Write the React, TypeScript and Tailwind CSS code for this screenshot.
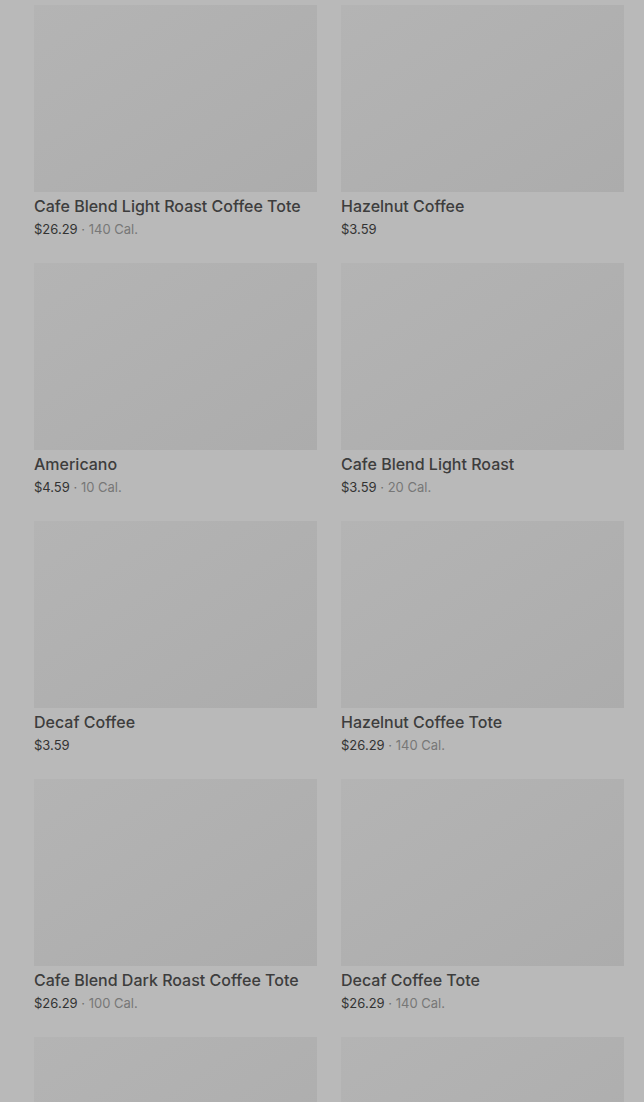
import React from 'react'

type Item = { name?: string; price?: string; cal?: string }

const items: Item[] = [
  { name: 'Cafe Blend Light Roast Coffee Tote', price: '$26.29', cal: '140 Cal.' },
  { name: 'Hazelnut Coffee', price: '$3.59' },
  { name: 'Americano', price: '$4.59', cal: '10 Cal.' },
  { name: 'Cafe Blend Light Roast', price: '$3.59', cal: '20 Cal.' },
  { name: 'Decaf Coffee', price: '$3.59' },
  { name: 'Hazelnut Coffee Tote', price: '$26.29', cal: '140 Cal.' },
  { name: 'Cafe Blend Dark Roast Coffee Tote', price: '$26.29', cal: '100 Cal.' },
  { name: 'Decaf Coffee Tote', price: '$26.29', cal: '140 Cal.' },
  // last row only peeks in under the fold
  {},
  {},
]

const ProductCard = ({ item }: { item: Item }) => (
  <div className="flex flex-col">
    <div className="h-[187px] bg-gradient-to-br from-[#b4b4b4] to-[#acacac]" />
    {item.name && (
      <>
        <div className="mt-1 text-[16px] leading-5 font-medium text-[#3d3d3d] truncate">{item.name}</div>
        <div className="mt-[3px] text-[13px] leading-5 text-[#333333]">
          {item.price}
          {item.cal && (
            <>
              <span className="text-[#6e6e6e]"> · </span>
              <span className="text-[#777777]">{item.cal}</span>
            </>
          )}
        </div>
      </>
    )}
  </div>
)

const App = () => {
  return (
    <div
      className="h-[1102px] overflow-hidden bg-[#b9b9b9]"
      style={{ fontFamily: 'Inter, "Noto Sans", sans-serif' }}
    >
      <div className="grid grid-cols-2 gap-x-6 gap-y-6 pt-[5px] pl-[34px] pr-[20px]">
        {items.map((item, i) => (
          <ProductCard key={i} item={item} />
        ))}
      </div>
    </div>
  )
}

export default App
